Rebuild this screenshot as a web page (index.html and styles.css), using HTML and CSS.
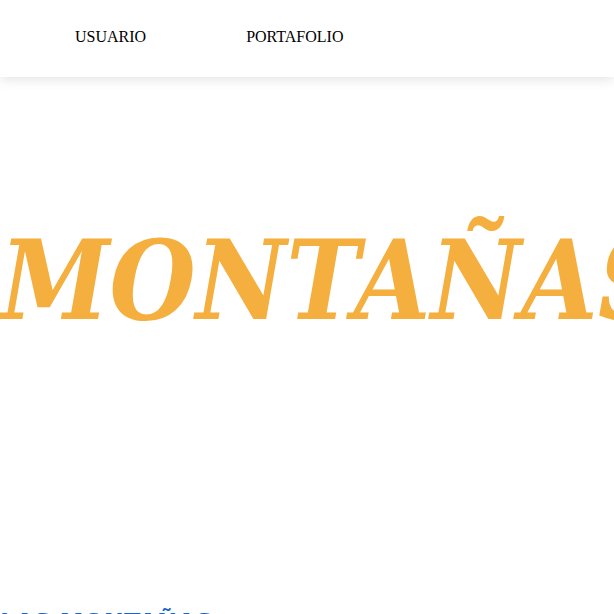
FILE: index.html
```html
<!DOCTYPE html>
<html lang="es">
<head>
<meta charset="utf-8">
<title>Montañas</title>
<link rel="stylesheet" href="styles.css">
</head>
<body>
<header class="nav">
  <a class="nav-link" href="#">USUARIO</a>
  <a class="nav-link" href="#">PORTAFOLIO</a>
</header>
<section class="hero">
  <h1 class="hero-title">MONTAÑAS</h1>
</section>
<section class="section">
  <h2 class="section-title">LAS MONTAÑAS</h2>
</section>
</body>
</html>
```
FILE: styles.css
```css
html, body {
  margin: 0;
  padding: 0;
  background: #fff;
  overflow: hidden;
}
body {
  font-family: "Liberation Serif", "Times New Roman", serif;
}
.nav {
  height: 77px;
  display: flex;
  align-items: center;
  gap: 100px;
  padding-left: 75px;
  background: #fff;
  box-shadow: 0 2px 12px rgba(0,0,0,0.12);
  position: relative;
  z-index: 1;
}
.nav-link {
  color: #000;
  text-decoration: none;
  font-size: 16px;
  margin-top: -4px;
}
.hero {
  height: 532px;
  padding-top: 140px;
  box-sizing: border-box;
}
.hero-title {
  margin: 0;
  font-family: "DejaVu Serif", serif;
  font-stretch: condensed;
  font-style: italic;
  font-weight: bold;
  font-size: 110px;
  line-height: 128px;
  color: #f4af3f;
  white-space: nowrap;
}
.section-title {
  margin: 0;
  font-family: "DejaVu Sans", sans-serif;
  font-size: 24px;
  line-height: 28px;
  color: #1565d8;
}
```
